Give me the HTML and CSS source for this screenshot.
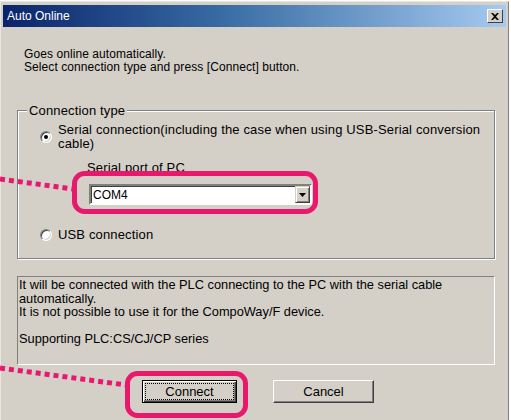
FILE: index.html
```html
<!DOCTYPE html>
<html>
<head>
<meta charset="utf-8">
<link rel="stylesheet" href="styles.css">
</head>
<body>
<div class="window">
  <div class="titlebar">
    <span class="title">Auto Online</span>
    <span class="close"><svg width="8" height="7" viewBox="0 0 8 7"><path d="M0 0h2l2 2 2-2h2L5 3.5 8 7H6L4 5 2 7H0l3-3.5z" fill="#000"/></svg></span>
  </div>
  <div class="content">
    <div class="intro">Goes online automatically.<br>Select connection type and press [Connect] button.</div>
    <div class="group">
      <div class="legend">Connection type</div>
      <div class="radio-row first">
        <span class="radio checked"><span class="dot"></span></span>
        <span class="radio-label">Serial connection(including the case when using USB-Serial conversion<br>cable)</span>
      </div>
      <div class="port">
        <div class="port-label">Serial port of PC</div>
        <div class="combo">
          <span class="combo-text">COM4</span>
          <span class="combo-btn"><svg width="7" height="4" viewBox="0 0 7 4"><path d="M0 0h7L3.5 4z" fill="#000"/></svg></span>
        </div>
      </div>
      <div class="radio-row usb">
        <span class="radio"></span>
        <span class="radio-label">USB connection</span>
      </div>
    </div>
    <div class="desc">It will be connected with the PLC connecting to the PC with the serial cable<br>automatically.<br>It is not possible to use it for the CompoWay/F device.<br><br>Supporting PLC:CS/CJ/CP series</div>
    <div class="buttons">
      <button class="btn default"><span class="focus">Connect</span></button>
      <button class="btn cancel"><span class="nofocus">Cancel</span></button>
    </div>
  </div>
</div>
<svg class="annot" width="511" height="420" viewBox="0 0 511 420">
  <g fill="none" stroke="#e8186d" stroke-width="5">
    <rect x="74.5" y="173.5" width="241" height="38" rx="10"/>
    <rect x="127.5" y="373.5" width="118" height="42" rx="10"/>
    <path d="M0 179L73 189" stroke-dasharray="5 4"/>
    <path d="M0 368L126 385" stroke-dasharray="5 4"/>
  </g>
</svg>
</body>
</html>
```

FILE: styles.css
```css
html, body {
  margin: 0;
  padding: 0;
  background: #fff;
}
body {
  width: 511px;
  height: 420px;
  overflow: hidden;
  position: relative;
  font-family: "Liberation Sans", Arial, sans-serif;
  color: #000;
}
.window {
  margin-top: 1px;
  width: 509px;
  height: 430px;
  background: #d4d0c8;
  border-left: 1px solid #e8e6e1;
  border-top: 1px solid #e8e6e1;
  border-right: 1px solid #808080;
  padding: 3px 2px 0 2px;
  box-sizing: border-box;
}
.titlebar {
  height: 22px;
  background: linear-gradient(to right, #0a246a 0%, #3a6ea5 45%, #a6caf0 100%);
  display: flex;
  align-items: center;
  justify-content: space-between;
  padding: 0 3px 0 4px;
}
.title {
  color: #fff;
  font-size: 12px;
}
.close {
  width: 16px;
  height: 14px;
  background: #d4d0c8;
  box-sizing: border-box;
  border: 1px solid;
  border-color: #fff #404040 #404040 #fff;
  display: flex;
  align-items: center;
  justify-content: center;
}
.content {
  padding: 0 11px 0 14px;
}
.intro {
  font-size: 12px;
  line-height: 13px;
  letter-spacing: 0.08px;
  margin-top: 21px;
  padding-left: 7px;
}
.group {
  margin-top: 36px;
  padding: 0 0 0 22px;
  height: 149px;
  box-sizing: border-box;
  border: 1px solid #808080;
  box-shadow: inset 1px 1px 0 #fff, 1px 1px 0 #fff;
  font-size: 13px;
  letter-spacing: 0.15px;
}
.legend {
  width: fit-content;
  margin: -7px 0 0 -13px;
  padding: 0 2px;
  height: 13px;
  line-height: 13px;
  background: #d4d0c8;
}
.radio-row {
  display: flex;
  align-items: center;
  gap: 6px;
}
.first {
  margin-top: 6px;
}
.radio-label {
  line-height: 14px;
}
.radio {
  width: 12px;
  height: 12px;
  border-radius: 50%;
  background: #fff;
  box-sizing: border-box;
  border: 1px solid;
  border-color: #808080 #fff #fff #808080;
  box-shadow: inset 1px 1px 0 #404040, inset -1px -1px 0 #d4d0c8;
  display: flex;
  align-items: center;
  justify-content: center;
  flex: none;
}
.dot {
  width: 4px;
  height: 4px;
  border-radius: 50%;
  background: #000;
}
.port {
  padding-left: 49px;
  margin-top: 10px;
}
.port-label {
  line-height: 13px;
  margin-left: -2px;
}
.combo {
  margin-top: 10px;
  width: 223px;
  height: 21px;
  box-sizing: border-box;
  background: #fff;
  border: 2px solid;
  border-color: #808080 #fff #fff #808080;
  box-shadow: inset 1px 1px 0 #404040;
  display: flex;
  align-items: center;
  justify-content: space-between;
}
.combo-text {
  padding-left: 2px;
  font-size: 12px;
  letter-spacing: 0;
}
.combo-btn {
  width: 15px;
  height: 17px;
  background: #d4d0c8;
  box-sizing: border-box;
  border: 1px solid;
  border-color: #d4d0c8 #404040 #404040 #d4d0c8;
  box-shadow: inset 1px 1px 0 #fff, inset -1px -1px 0 #808080;
  display: flex;
  align-items: center;
  justify-content: center;
}
.usb {
  margin-top: 23px;
}
.desc {
  margin-top: 17px;
  height: 89px;
  box-sizing: border-box;
  border: 1px solid;
  border-color: #808080 #fff #fff #808080;
  font-size: 12.8px;
  line-height: 13.5px;
  padding: 1px 1px;
}
.buttons {
  display: flex;
  gap: 36px;
  margin-top: 15px;
  padding-left: 125px;
}
.btn {
  height: 23px;
  padding: 0;
  margin: 0;
  background: #d4d0c8;
  font-family: "Liberation Sans", Arial, sans-serif;
  font-size: 13px;
  color: #000;
  box-sizing: border-box;
  display: flex;
  align-items: stretch;
  justify-content: stretch;
}
.default {
  width: 95px;
  border: 1px solid #000;
  box-shadow: inset 1px 1px 0 #fff, inset -1px -1px 0 #404040, inset -2px -2px 0 #808080;
  padding: 3px;
}
.cancel {
  width: 101px;
  border: 1px solid;
  border-color: #fff #404040 #404040 #fff;
  box-shadow: inset -1px -1px 0 #808080;
  padding: 3px;
}
.focus, .nofocus {
  flex: 1;
  display: flex;
  align-items: center;
  justify-content: center;
}
.focus {
  outline: 1px dotted #000;
}
.annot {
  position: absolute;
  left: 0;
  top: 0;
  pointer-events: none;
}
```
